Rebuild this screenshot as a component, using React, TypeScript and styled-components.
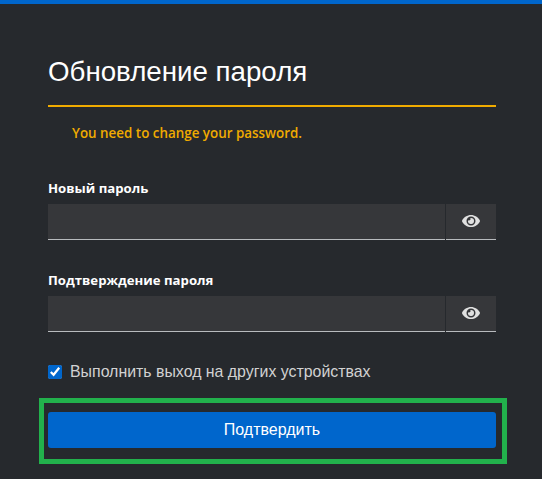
import styled, { createGlobalStyle } from 'styled-components';
import { FaEye } from 'react-icons/fa';

const GlobalStyle = createGlobalStyle`
  html, body {
    margin: 0;
    padding: 0;
    background: #26292d;
    font-family: "Liberation Sans", Arial, sans-serif;
  }
`;

function PasswordField({ label }: { label: string }) {
  return (
    <div>
      <FieldLabel>{label}</FieldLabel>
      <InputGroup>
        <PasswordInput type="password" />
        <EyeButton type="button" aria-label="Show password">
          <FaEye size={18} />
        </EyeButton>
      </InputGroup>
    </div>
  );
}

export default function App() {
  return (
    <Page>
      <GlobalStyle />
      <Title>Обновление пароля</Title>
      <Warning>You need to change your password.</Warning>
      <Fields>
        <PasswordField label="Новый пароль" />
        <PasswordField label="Подтверждение пароля" />
      </Fields>
      <CheckRow>
        <CheckInput type="checkbox" defaultChecked />
        Выполнить выход на других устройствах
      </CheckRow>
      <Highlight>
        <Submit type="button">Подтвердить</Submit>
      </Highlight>
    </Page>
  );
}

const Page = styled.main`
  box-sizing: border-box;
  height: 479px;
  overflow: hidden;
  border-top: 4px solid #0066cc;
  padding: 50px 46px 0 48px;
  background: #26292d;
  color: #fff;
`;

const Title = styled.h1`
  margin: 0;
  height: 51px;
  border-bottom: 2px solid #f0ab00;
  font-size: 27.7px;
  font-weight: 400;
  line-height: 36px;
`;

const Warning = styled.p`
  margin: 0 0 39px;
  padding: 18px 0 0 24px;
  color: #f0ab00;
  font-family: "Open Sans", sans-serif;
  font-size: 13.4px;
  font-weight: 600;
  line-height: 16px;
`;

const Fields = styled.div`
  display: flex;
  flex-direction: column;
  gap: 32px;
`;

const FieldLabel = styled.label`
  display: block;
  margin-bottom: 8px;
  color: #fff;
  font-family: "Open Sans", sans-serif;
  font-size: 13.2px;
  font-weight: 700;
  line-height: 16px;
`;

const InputGroup = styled.div`
  display: flex;
  gap: 1px;
  height: 36px;
`;

const PasswordInput = styled.input`
  flex: 1;
  min-width: 0;
  box-sizing: border-box;
  border: 0;
  border-bottom: 1px solid #b8bbbe;
  background: #36373a;
  color: #fff;
`;

const EyeButton = styled.button`
  display: flex;
  align-items: center;
  justify-content: center;
  box-sizing: border-box;
  width: 50px;
  padding: 0 0 2px;
  border: 0;
  border-bottom: 1px solid #b8bbbe;
  background: #36373a;
  color: #e0e0e0;
`;

const CheckRow = styled.label`
  display: flex;
  align-items: center;
  gap: 8px;
  margin-top: 28px;
  color: #d2d2d2;
  font-size: 15.9px;
  line-height: 24px;
`;

const CheckInput = styled.input`
  width: 14px;
  height: 14px;
  margin: 0;
  accent-color: #0066cc;
`;

const Highlight = styled.div`
  margin: 14px -11px 0 -9px;
  padding: 9px 6px 11px 4px;
  border: 5px solid #22b14c;
`;

const Submit = styled.button`
  display: block;
  width: 100%;
  height: 36px;
  border: 0;
  border-radius: 3px;
  background: #0066cc;
  color: #fff;
  font-family: "Liberation Sans", Arial, sans-serif;
  font-size: 16px;
`;
